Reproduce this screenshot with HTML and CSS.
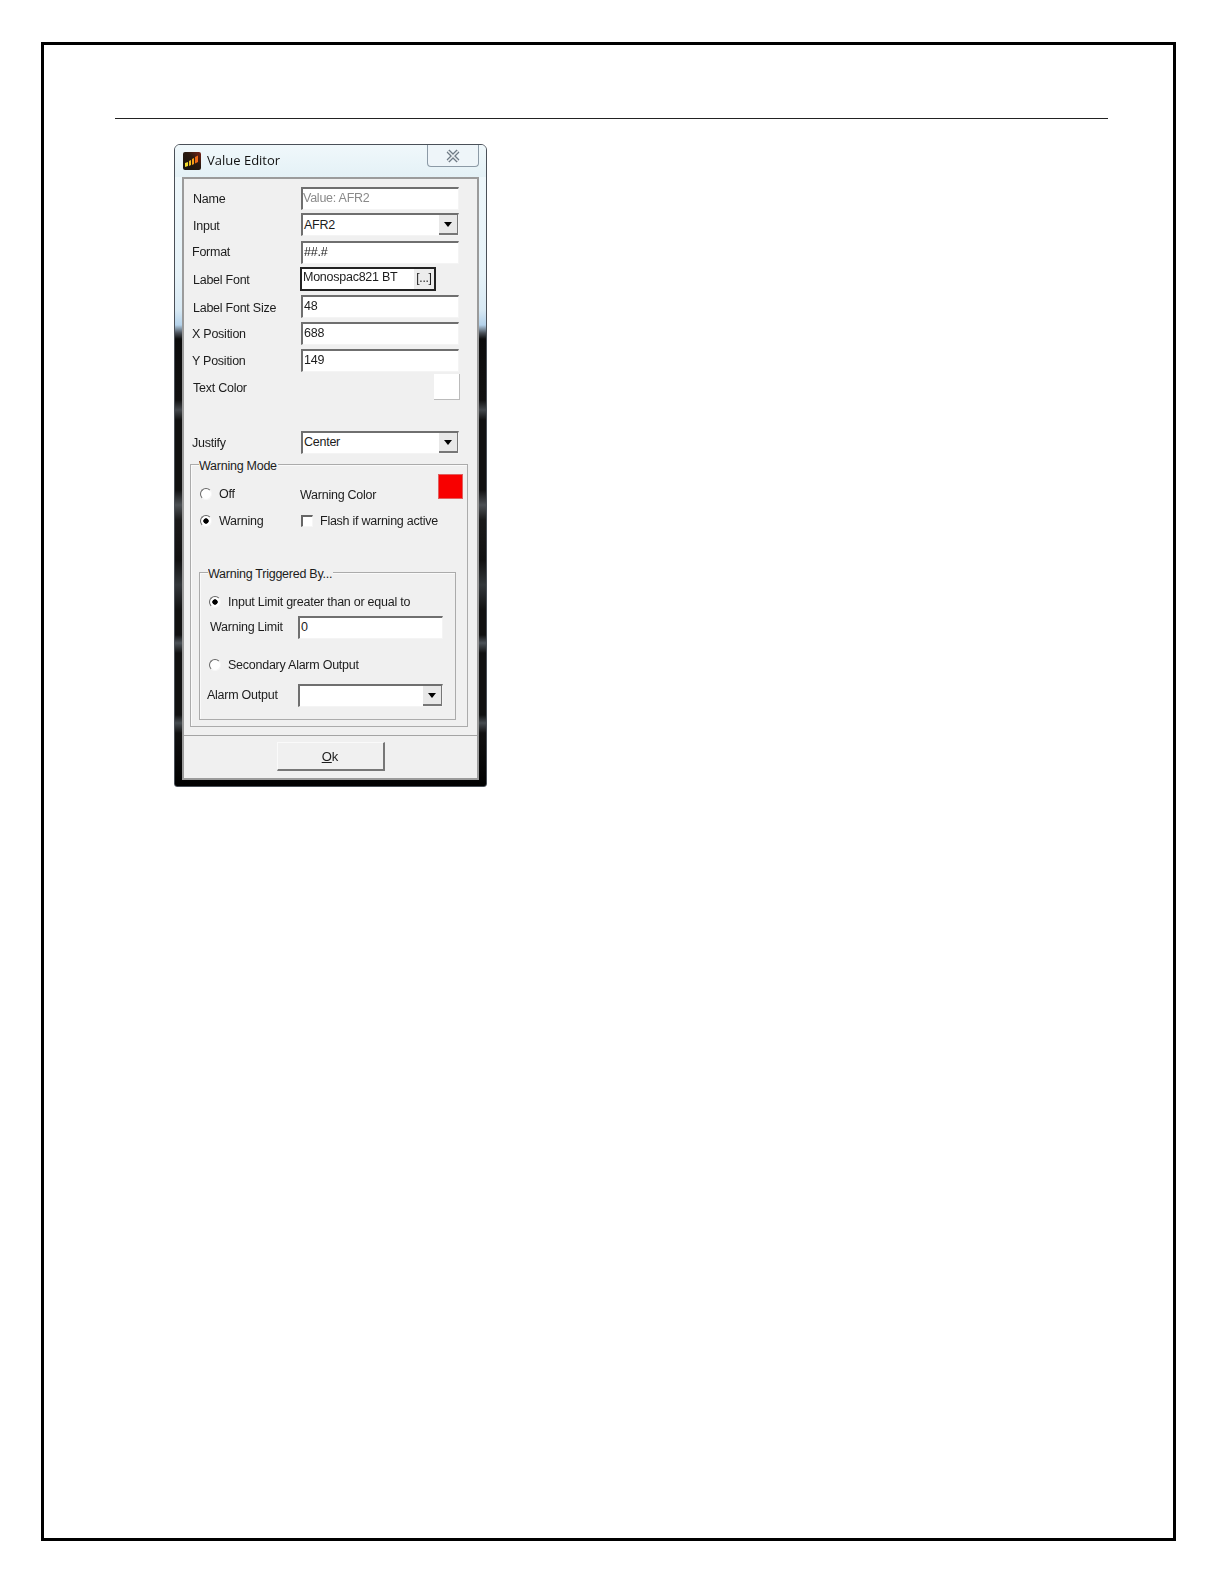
FILE: index.html
```html
<!DOCTYPE html>
<html lang="en">
  <head>
    <meta charset="utf-8">
    <title>Value Editor</title>
    <link rel="stylesheet" href="styles.css">
  </head>
  <body>
    <div class="page">
      <div class="rule"></div>

      <div class="dialog">
        <div class="titlebar">
          <svg class="appIcon" width="18" height="18" viewBox="0 0 18 18">
            <defs>
              <linearGradient id="iconBg" x1="0" y1="1" x2="1" y2="0">
                <stop offset="0" stop-color="#15130f"/>
                <stop offset="0.6" stop-color="#2a1a10"/>
                <stop offset="1" stop-color="#7a2418"/>
              </linearGradient>
            </defs>
            <rect width="18" height="18" rx="2" fill="url(#iconBg)"/>
            <path d="M2 11 L5 10 V14 L2 15 Z" fill="#f0dc30"/>
            <path d="M6 9 L8 8 V13 L6 14 Z" fill="#f2c020"/>
            <path d="M9 7 L11 6 V12 L9 13 Z" fill="#f4a018"/>
            <path d="M12 5 L15 3.5 V10 L12 11.5 Z" fill="#ee6a18"/>
          </svg>
          <span class="titleText">Value Editor</span>
          <div class="closeBtn">
            <svg width="16" height="14" viewBox="0 0 16 14">
              <path d="M3 2 L13 12 M13 2 L3 12" stroke="#6f7b86" stroke-width="4" fill="none"/>
              <path d="M3 2 L13 12 M13 2 L3 12" stroke="#e8edf0" stroke-width="1.6" fill="none"/>
            </svg>
          </div>
        </div>

        <div class="client">
          <form class="fields" action="#">
            <label class="lbl lblUp">Name</label>
            <div class="ipt iptDisabled">Value: AFR2</div>
            <label class="lbl">Input</label>
            <div class="ipt iptSel">AFR2<span class="arrowBtn"></span></div>
            <label class="lbl lblOut lblUp2">Format</label>
            <div class="ipt">##.#</div>
            <label class="lbl">Label Font</label>
            <div class="fontBox">Monospac821 BT<span class="dotsBtn">[...]</span></div>
            <label class="lbl">Label Font Size</label>
            <div class="ipt">48</div>
            <label class="lbl lblOut lblUp">X Position</label>
            <div class="ipt">688</div>
            <label class="lbl lblOut lblUp">Y Position</label>
            <div class="ipt">149</div>
            <label class="lbl lblDown">Text Color</label>
            <div class="textSwatch"></div>
            <label class="lbl lblOut lblUp">Justify</label>
            <div class="ipt">Center<span class="arrowBtn"></span></div>
          </form>

          <div class="group warnGroup">
            <span class="legend">Warning Mode</span>
            <div class="warnGrid">
              <label class="opt optOff"><input type="radio" name="mode">Off</label>
              <span class="colorLbl">Warning Color</span>
              <div class="redSwatch"></div>
              <label class="opt"><input type="radio" name="mode" checked>Warning</label>
              <label class="opt flashOpt"><input type="checkbox">Flash if warning active</label>
            </div>

            <div class="group trigGroup">
              <span class="legend">Warning Triggered By...</span>
              <label class="opt trigOpt"><input type="radio" name="trig" checked>Input Limit greater than or equal to</label>
              <div class="trigRow">
                <span class="trigLbl">Warning Limit</span>
                <div class="ipt iptShort">0</div>
              </div>
              <label class="opt trigOpt secondOpt"><input type="radio" name="trig">Secondary Alarm Output</label>
              <div class="trigRow alarmRow">
                <span class="trigLbl alarmLbl">Alarm Output</span>
                <div class="ipt iptShort"><span class="arrowBtn"></span></div>
              </div>
            </div>
          </div>

          <div class="footer">
            <button type="button" class="okBtn"><u>O</u>k</button>
          </div>
        </div>
      </div>
    </div>
  </body>
</html>
```

FILE: styles.css
```css
* {
	margin:0;
	padding:0;
	box-sizing:border-box;
}

body {background:#fff;color:#1c1c1c;font-family:"Liberation Sans",Arial,sans-serif;font-size:12.5px;letter-spacing:-.25px;}

/* page frame */
.page {width:1135px;height:1499px;margin:42px 0 0 41px;padding-top:73px;border:3px solid #000;}
.rule {width:993px;height:1px;margin-left:71px;background:#222;}

/* dialog window */
.dialog {
	width:313px;
	height:643px;
	margin:25px 0 0 130px;
	padding:0 7px 7px;
	border:1px solid #4a5058;
	border-radius:6px 6px 3px 3px;
	background:linear-gradient(to bottom,#f0f8fb 0,#e6f2f8 130px,#d8e9f4 165px,#b4d2ea 180px,#4a5058 188px,#0c0c0c 194px,#111 255px,#44484c 265px,#111 275px,#111 345px,#4c5054 360px,#1a1a1a 375px,#111 415px,#33373a 440px,#111 465px,#111 490px,#4c5258 498px,#111 508px,#111 570px,#464c50 578px,#111 588px,#000 643px);
	filter:blur(0.45px);
}
.titlebar {display:flex;align-items:flex-start;height:32px;margin:0 -7px;padding:0 7px 0 8px;border-radius:5px 5px 0 0;background:linear-gradient(to bottom,#f0f8fb,#e4f1f6);}
.appIcon {margin-top:7px;flex:none;}
.titleText {margin:6px 0 0 6px;font-family:"Open Sans",sans-serif;font-size:13px;letter-spacing:0;line-height:18px;color:#111;}
.closeBtn {display:flex;align-items:center;justify-content:center;width:52px;height:22px;margin-left:auto;border:1px solid #8c9aa6;border-top:0;border-radius:0 0 4px 4px;background:#eef5f9;}

.client {height:603px;padding-top:8px;border:2px solid #9b9b9b;background:#f0f0f0;}

/* main fields */
.fields {
	display:grid;
	grid-template-columns:108px 158px;
	grid-template-rows:26px 28px 26px 28px 27px 27px 25px 57px 33px;
	margin-left:9px;
}
.lbl {align-self:start;height:22px;line-height:26px;}
.lblOut {margin-left:-1px;}
.lblUp {margin-top:-1px;}
.lblUp2 {margin-top:-2px;}
.lblDown {margin-top:1px;}

.ipt {
	position:relative;
	width:158px;
	height:23px;
	padding-left:1px;
	border-style:solid;
	border-width:2px 1px 1px 2px;
	border-color:#6f6f6f #f4f4f4 #f4f4f4 #6f6f6f;
	background:#fff;
	line-height:18px;
}
.iptDisabled {padding-left:0;color:#8a8a8a;}
.iptSel {line-height:20px;}
.iptShort {width:145px;}
.arrowBtn {position:absolute;top:0;right:0;width:19px;height:20px;background:#e8e8e8;border-right:1px solid #777;border-bottom:2px solid #777;}
.arrowBtn:after {content:"";position:absolute;top:7px;left:5px;border:4px solid transparent;border-top:5px solid #000;border-bottom:0;}

.fontBox {position:relative;width:136px;height:24px;margin-left:-1px;padding-left:1px;border:2px solid #222;background:#fff;line-height:17px;}
.dotsBtn {position:absolute;top:0;right:0;width:20px;height:20px;background:#ececec;text-align:center;font-size:12px;line-height:19px;}

.textSwatch {width:26px;height:26px;margin-left:133px;background:#fff;border-right:1px solid #bbb;border-bottom:1px solid #bbb;}

/* group boxes */
.group {position:relative;border:1px solid #ababab;box-shadow:inset 1px 1px 0 #fafafa;}
.legend {position:absolute;top:-7px;left:8px;padding-right:1px;background:#f0f0f0;line-height:16px;}
.warnGroup {width:278px;height:263px;margin-left:6px;}
.trigGroup {width:257px;height:148px;margin:38px 0 0 8px;}

.warnGrid {
	display:grid;
	grid-template-columns:100px 138px 25px;
	grid-template-rows:36px 26px;
	margin:7px 0 0 9px;
}
.opt {display:flex;align-items:center;gap:7px;height:26px;align-self:end;}
.optOff {margin-bottom:1px;}
.opt input {
	flex:none;
	width:12px;
	height:12px;
	appearance:none;
	background:#fff;
	border:1px solid;
	border-color:#666 #f6f6f6 #f6f6f6 #666;
}
.opt input[type=radio] {border-radius:50%;}
.opt input[type=radio]:checked {background:radial-gradient(circle,#000 0,#000 2.4px,#fff 3px);}
.opt input[type=checkbox] {border-width:2px 1px 1px 2px;margin-left:1px;}
.colorLbl {align-self:end;height:26px;line-height:26px;}
.redSwatch {width:25px;height:25px;margin-top:2px;background:#f80000;border:1px solid #e06060;}
.flashOpt {grid-column:2 / 4;gap:7px;}

.trigOpt {margin:16px 0 0 9px;}
.secondOpt {margin-top:13px;}
.trigRow {display:flex;align-items:flex-start;margin:1px 0 0 10px;}
.trigLbl {width:88px;height:21px;line-height:22px;}
.alarmRow {margin:6px 0 0 7px;}
.alarmLbl {width:91px;}

/* ok button */
.footer {display:flex;justify-content:center;height:43px;margin-top:8px;padding-top:6px;border-top:1px solid #a4a4a4;}
.okBtn {width:108px;height:29px;background:#f0f0f0;border-style:solid;border-width:1px 2px 2px 1px;border-color:#fafafa #777 #777 #fafafa;font-family:"Liberation Sans",Arial,sans-serif;font-size:13px;color:#1c1c1c;}
```
